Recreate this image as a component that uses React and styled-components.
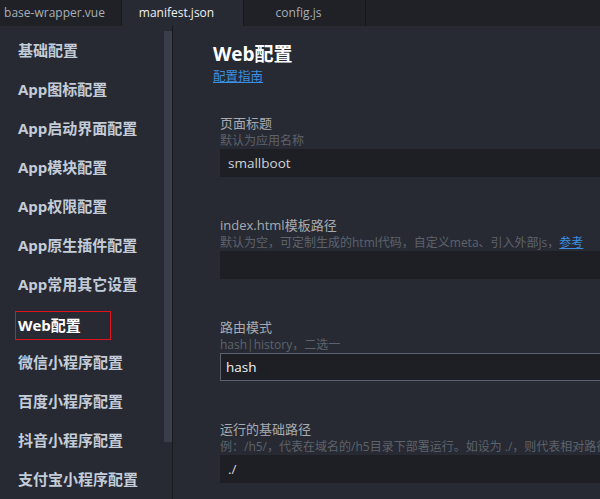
import React from 'react';
import styled, { createGlobalStyle } from 'styled-components';

const GlobalStyle = createGlobalStyle`
  html, body {
    margin: 0;
    padding: 0;
    background: #272a33;
  }
  body {
    font-family: "Open Sans", "Noto Sans CJK SC", sans-serif;
  }
`;

const tabs = [
  { name: 'base-wrapper.vue' },
  { name: 'manifest.json', active: true },
  { name: 'config.js' },
];

const menu = [
  '基础配置',
  'App图标配置',
  'App启动界面配置',
  'App模块配置',
  'App权限配置',
  'App原生插件配置',
  'App常用其它设置',
  'Web配置',
  '微信小程序配置',
  '百度小程序配置',
  '抖音小程序配置',
  '支付宝小程序配置',
];

export default function App() {
  return (
    <Wrapper>
      <GlobalStyle />
      <TabBar>
        {tabs.map(t => (
          <Tab key={t.name} $active={t.active}>{t.name}</Tab>
        ))}
      </TabBar>
      <Body>
        <SideBar>
          <Menu>
            {menu.map(m => (
              <MenuItem key={m} $active={m === 'Web配置'}>
                <MenuLabel $active={m === 'Web配置'}>{m}</MenuLabel>
              </MenuItem>
            ))}
          </Menu>
          <ScrollTrack>
            <ScrollThumb />
          </ScrollTrack>
        </SideBar>
        <Main>
          <Title>Web配置</Title>
          <GuideLink href="#">配置指南</GuideLink>
          <Form>
            <Field>
              <Label>页面标题</Label>
              <Hint>默认为应用名称</Hint>
              <Input>smallboot</Input>
            </Field>
            <Field>
              <Label>index.html模板路径</Label>
              <Hint>
                默认为空，可定制生成的html代码，自定义meta、引入外部js，<HintLink href="#">参考</HintLink>
              </Hint>
              <Input />
            </Field>
            <Field>
              <Label>路由模式</Label>
              <Hint>hash|history，二选一</Hint>
              <Input $select>hash</Input>
            </Field>
            <Field>
              <Label>运行的基础路径</Label>
              <Hint>例：/h5/，代表在域名的/h5目录下部署运行。如设为 ./，则代表相对路径</Hint>
              <Input>./</Input>
            </Field>
          </Form>
        </Main>
      </Body>
    </Wrapper>
  );
}

const Wrapper = styled.div`
  width: 600px;
  height: 499px;
  overflow: hidden;
  display: flex;
  flex-direction: column;
  background: #272a33;
`;

const TabBar = styled.div`
  display: flex;
  height: 26px;
  flex-shrink: 0;
  background: #1f2127;
`;

const Tab = styled.div`
  width: 122px;
  box-sizing: border-box;
  display: flex;
  align-items: center;
  justify-content: center;
  padding: 0 12px 1px 0;
  font-size: 12px;
  border-right: 1px solid #17181c;
  background: ${p => (p.$active ? '#272a33' : '#1f2127')};
  color: ${p => (p.$active ? '#eef0f2' : '#a9aeb6')};
  white-space: nowrap;
  overflow: hidden;
`;

const Body = styled.div`
  display: flex;
  flex: 1;
  min-height: 0;
`;

const SideBar = styled.aside`
  display: flex;
  width: 173px;
  flex-shrink: 0;
  border-right: 1px solid #18191d;
  box-sizing: border-box;
`;

const Menu = styled.nav`
  width: 164px;
  padding-top: 4px;
`;

const MenuItem = styled.div`
  display: flex;
  align-items: center;
  height: 39px;
  padding-left: ${p => (p.$active ? '15px' : '18px')};
`;

const MenuLabel = styled.span`
  font-size: 15px;
  font-weight: 700;
  white-space: nowrap;
  color: ${p => (p.$active ? '#ffffff' : '#c3ccd8')};
  ${p =>
    p.$active &&
    `
    box-sizing: border-box;
    width: 96px;
    height: 29px;
    margin-top: 5px;
    padding: 0 0 2px 2px;
    display: flex;
    align-items: center;
    border: 1px solid #e0141e;
  `}
`;

const ScrollTrack = styled.div`
  width: 8px;
  padding-top: 5px;
`;

const ScrollThumb = styled.div`
  height: 411px;
  background: #393e4a;
`;

const Main = styled.main`
  flex: 1;
  min-width: 0;
  padding: 15px 0 0 40px;
  overflow: hidden;
`;

const Title = styled.h1`
  margin: 0;
  font-size: 19px;
  line-height: 26px;
  font-weight: 700;
  color: #ffffff;
`;

const GuideLink = styled.a`
  display: block;
  font-size: 12.5px;
  line-height: 20px;
  color: #3b8fe0;
  text-decoration: underline;
`;

const Form = styled.div`
  display: flex;
  flex-direction: column;
  gap: 39px;
  padding: 27px 0 0 7px;
`;

const Field = styled.div`
  display: flex;
  flex-direction: column;
`;

const Label = styled.div`
  font-size: 13px;
  line-height: 18px;
  color: #a7aab0;
  white-space: nowrap;
`;

const Hint = styled.div`
  font-size: 12px;
  line-height: 17px;
  color: #5e626b;
  white-space: nowrap;
`;

const HintLink = styled.a`
  color: #3b8fe0;
  text-decoration: underline;
`;

const Input = styled.div`
  box-sizing: border-box;
  width: 460px;
  height: 28px;
  display: flex;
  align-items: center;
  padding-left: ${p => (p.$select ? '5px' : '8px')};
  font-size: 13.5px;
  background: #1e1f25;
  color: ${p => (p.$select ? '#f2f3f5' : '#cfd3d9')};
  border: ${p => (p.$select ? '1px solid #5a6170' : 'none')};
`;
